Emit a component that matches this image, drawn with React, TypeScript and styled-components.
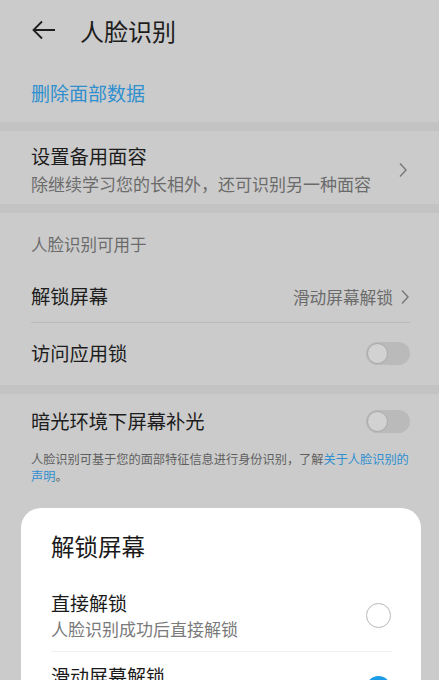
import { createGlobalStyle, styled } from "styled-components";

const GlobalStyle = createGlobalStyle`
  html, body {
    margin: 0;
    padding: 0;
    background: #cbcbcb;
  }
  body {
    font-family: "Noto Sans CJK SC", "Noto Sans", sans-serif;
  }
`;

const dark = "#1d1d1d";
const grey = "#6b6b6b";
const blue = "#2f8fcf";

function Chevron() {
  return (
    <svg width="10" height="16" viewBox="0 0 10 16">
      <path d="M2 1.5 L8 8 L2 14.5" fill="none" stroke="#777" strokeWidth="1.4" />
    </svg>
  );
}

function Toggle() {
  return (
    <ToggleTrack>
      <ToggleKnob />
    </ToggleTrack>
  );
}

function Radio(props: { checked: boolean }) {
  return (
    <RadioCircle checked={props.checked}>
      {props.checked && (
        <svg width="14" height="14" viewBox="0 0 14 14">
          <path d="M3 7.2 L6 10 L11 4.5" fill="none" stroke="#fff" strokeWidth="1.8" />
        </svg>
      )}
    </RadioCircle>
  );
}

export default function App() {
  return (
    <>
      <GlobalStyle />
      <Page>
        <Header>
          <svg width="24" height="20" viewBox="0 0 24 20">
            <path d="M1.5 10 H23 M10 1.5 L1.5 10 L10 18.5" fill="none" stroke="#1d1d1d" strokeWidth="1.8" />
          </svg>
          <HeaderTitle>人脸识别</HeaderTitle>
        </Header>
        <LinkRow>删除面部数据</LinkRow>
        <Band />
        <TwoLineRow>
          <TextBlock>
            <ItemTitle>设置备用面容</ItemTitle>
            <ItemSub>除继续学习您的长相外，还可识别另一种面容</ItemSub>
          </TextBlock>
          <Chevron />
        </TwoLineRow>
        <Band />
        <SectionHead>人脸识别可用于</SectionHead>
        <Row divider>
          <ItemTitle>解锁屏幕</ItemTitle>
          <RowValue>
            滑动屏幕解锁
            <Chevron />
          </RowValue>
        </Row>
        <Row tall>
          <ItemTitle>访问应用锁</ItemTitle>
          <Toggle />
        </Row>
        <Band />
        <Row short>
          <ItemTitle>暗光环境下屏幕补光</ItemTitle>
          <Toggle />
        </Row>
        <Footnote>
          人脸识别可基于您的面部特征信息进行身份识别，了解<FootLink>关于人脸识别的声明</FootLink>。
        </Footnote>

        <Sheet>
          <SheetTitle>解锁屏幕</SheetTitle>
          <SheetOption divider>
            <TextBlock>
              <OptionTitle>直接解锁</OptionTitle>
              <OptionSub>人脸识别成功后直接解锁</OptionSub>
            </TextBlock>
            <Radio checked={false} />
          </SheetOption>
          <SheetOption>
            <TextBlock>
              <OptionTitle>滑动屏幕解锁</OptionTitle>
              <OptionSub>人脸识别成功后滑动屏幕解锁</OptionSub>
            </TextBlock>
            <Radio checked />
          </SheetOption>
        </Sheet>
      </Page>
    </>
  );
}

const Page = styled.div`
  position: relative;
  width: 439px;
  height: 680px;
  overflow: hidden;
  background: #cbcbcb;
`;

const Header = styled.div`
  height: 64px;
  display: flex;
  align-items: center;
  padding: 0 0 4px 32px;
  gap: 24px;
  box-sizing: border-box;
`;

const HeaderTitle = styled.h1`
  margin: 0;
  font-size: 24px;
  font-weight: 400;
  color: ${dark};
`;

const LinkRow = styled.div`
  height: 58px;
  display: flex;
  align-items: center;
  padding: 0 31px;
  padding-bottom: 1px;
  box-sizing: border-box;
  font-size: 19px;
  color: ${blue};
`;

const Band = styled.div`
  height: 9px;
  background: #c3c3c3;
`;

const TwoLineRow = styled.div`
  height: 73px;
  display: flex;
  align-items: center;
  justify-content: space-between;
  padding: 4px 31px 0;
  box-sizing: border-box;
`;

const TextBlock = styled.div`
  display: flex;
  flex-direction: column;
`;

const ItemTitle = styled.div`
  font-size: 19.3px;
  line-height: 27px;
  color: ${dark};
`;

const ItemSub = styled.div`
  font-size: 17px;
  line-height: 27px;
  color: ${grey};
`;

const SectionHead = styled.div`
  height: 58px;
  display: flex;
  align-items: center;
  padding: 4px 31px 0;
  box-sizing: border-box;
  font-size: 16.5px;
  color: ${grey};
`;

const Row = styled.div<{ divider?: boolean; tall?: boolean; short?: boolean }>`
  height: ${(p) => (p.tall ? 62 : p.short ? 54 : 52)}px;
  margin: 0 29px 0 31px;
  display: flex;
  align-items: center;
  justify-content: space-between;
  border-bottom: ${(p) => (p.divider ? "1px solid #bbbbbb" : "none")};
  padding-bottom: ${(p) => (p.tall ? 2 : 0)}px;
  box-sizing: border-box;
`;

const RowValue = styled.div`
  display: flex;
  align-items: center;
  gap: 7px;
  font-size: 16.7px;
  color: ${grey};
`;

const ToggleTrack = styled.div`
  width: 44px;
  height: 23px;
  border-radius: 12px;
  background: #bababa;
  display: flex;
  align-items: center;
  padding: 0 1px;
  box-sizing: border-box;
`;

const ToggleKnob = styled.div`
  width: 21px;
  height: 21px;
  border-radius: 50%;
  background: #d2d2d2;
  border: 1.5px solid #a9a9a9;
  box-sizing: border-box;
`;

const Footnote = styled.p`
  margin: 3px 0 0;
  padding: 0 29px 0 31px;
  font-size: 12.2px;
  line-height: 17px;
  color: #5f5f5f;
`;

const FootLink = styled.span`
  color: ${blue};
`;

const Sheet = styled.div`
  position: absolute;
  left: 21px;
  right: 18px;
  top: 508px;
  height: 240px;
  background: #ffffff;
  border-radius: 20px;
  padding: 13px 29px 0 30px;
  box-sizing: border-box;
`;

const SheetTitle = styled.h2`
  margin: 0;
  height: 50px;
  display: flex;
  align-items: center;
  font-size: 23.5px;
  font-weight: 400;
  color: #1a1a1a;
`;

const SheetOption = styled.div<{ divider?: boolean }>`
  height: 72px;
  margin-top: ${(p) => (p.divider ? 9 : 0)}px;
  display: flex;
  align-items: center;
  justify-content: space-between;
  border-bottom: ${(p) => (p.divider ? "1.5px solid #efefef" : "none")};
  box-sizing: border-box;
`;

const OptionTitle = styled.div`
  font-size: 19px;
  line-height: 26px;
  color: #1a1a1a;
`;

const OptionSub = styled.div`
  font-size: 17px;
  line-height: 25px;
  color: #7a7a7a;
`;

const RadioCircle = styled.div<{ checked: boolean }>`
  width: 25px;
  height: 25px;
  border-radius: 50%;
  box-sizing: border-box;
  border: ${(p) => (p.checked ? "none" : "1.5px solid #b8b8b8")};
  background: ${(p) => (p.checked ? "#1a9de6" : "transparent")};
  display: flex;
  align-items: center;
  justify-content: center;
  margin-right: 1px;
`;
